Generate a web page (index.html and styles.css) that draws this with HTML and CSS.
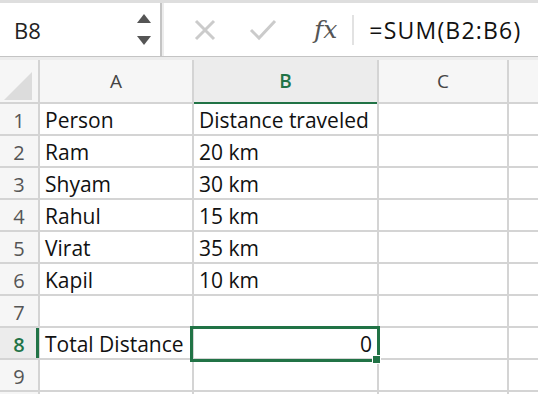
FILE: index.html
```html
<!DOCTYPE html>
<html lang="en">

<head>
    <meta charset="UTF-8">
    <title>Sheet1</title>
    <link rel="stylesheet" href="styles.css">
</head>

<body>
    <!-- formula bar -->
    <div class="topbar">
        <div class="namebox">
            <span class="cellname">B8</span>
            <svg class="spin" width="14" height="32" viewBox="0 0 14 32">
                <polygon points="7,0 14,9 0,9" fill="#555" />
                <polygon points="0,22 14,22 7,31" fill="#555" />
            </svg>
        </div>
        <div class="fbar">
            <svg class="ico" width="22" height="22" viewBox="0 0 22 22">
                <path d="M2 2 L20 20 M20 2 L2 20" stroke="#cbcbcb" stroke-width="3" fill="none" />
            </svg>
            <svg class="ico check" width="28" height="22" viewBox="0 0 28 22">
                <path d="M2 11 L10 19 L26 2" stroke="#cbcbcb" stroke-width="3" fill="none" />
            </svg>
            <span class="fx">fx</span>
            <span class="fsep"></span>
            <span class="formula">=SUM(B2:B6)</span>
        </div>
    </div>
    <div class="topline"></div>

    <!-- sheet grid -->
    <div class="sheet">
        <div class="hd corner">
            <svg width="32" height="32" viewBox="0 0 32 32">
                <polygon points="30,2 30,30 2,30" fill="#dcdcdc" />
            </svg>
        </div>
        <div class="hd">A</div>
        <div class="hd colsel">B</div>
        <div class="hd">C</div>
        <div class="hd"></div>

        <div class="rn">1</div><div class="c">Person</div><div class="c">Distance traveled</div><div class="c"></div><div class="c"></div>
        <div class="rn">2</div><div class="c">Ram</div><div class="c">20 km</div><div class="c"></div><div class="c"></div>
        <div class="rn">3</div><div class="c">Shyam</div><div class="c">30 km</div><div class="c"></div><div class="c"></div>
        <div class="rn">4</div><div class="c">Rahul</div><div class="c">15 km</div><div class="c"></div><div class="c"></div>
        <div class="rn">5</div><div class="c">Virat</div><div class="c">35 km</div><div class="c"></div><div class="c"></div>
        <div class="rn">6</div><div class="c">Kapil</div><div class="c">10 km</div><div class="c"></div><div class="c"></div>
        <div class="rn">7</div><div class="c"></div><div class="c"></div><div class="c"></div><div class="c"></div>
        <div class="rn rowsel">8</div><div class="c">Total Distance</div><div class="c num active">0</div><div class="c"></div><div class="c"></div>
        <div class="rn">9</div><div class="c"></div><div class="c"></div><div class="c"></div><div class="c"></div>
        <div class="rn"></div><div class="c"></div><div class="c"></div><div class="c"></div><div class="c"></div>
    </div>
</body>

</html>
```

FILE: styles.css
```css
body {
    margin: 0;
    width: 538px;
    height: 394px;
    overflow: hidden;
    background: #fff;
    font-family: "Open Sans", Lato, sans-serif;
    color: #111;
}

.topbar {
    display: flex;
    height: 53px;
    border-top: 3px solid #dedede;
    border-bottom: 1px solid #c4c4c4;
    background: #ececec;
}

.namebox {
    width: 162px;
    display: flex;
    align-items: center;
    justify-content: space-between;
    background: #fff;
    border-right: 2px solid #c4c4c4;
    padding: 0 9px 0 14px;
    box-sizing: border-box;
}

.cellname {
    font-size: 22px;
    color: #222;
}

.fbar {
    flex: 1;
    margin-left: 2px;
    display: flex;
    align-items: center;
    background: #fff;
}

.ico {
    margin-left: 30px;
}

.check {
    margin-left: 33px;
}

.fx {
    margin-left: 37px;
    font-family: "DejaVu Serif", "Liberation Serif", serif;
    font-style: italic;
    font-size: 25px;
    color: #555;
}

.fsep {
    width: 2px;
    height: 30px;
    margin-left: 15px;
    background: #e2e2e2;
}

.formula {
    margin-left: 15px;
    font-size: 23px;
    letter-spacing: 1.2px;
    color: #111;
}

.topline {
    height: 3px;
    background: #ececec;
}

.sheet {
    display: grid;
    grid-template-columns: 38px 152px 183px 128px 1fr;
    grid-template-rows: 42px;
    grid-auto-rows: 30px;
    gap: 2px;
    background: #d4d4d4;
}

.hd {
    background: #f6f6f6;
    display: flex;
    align-items: center;
    justify-content: center;
    font-size: 19px;
    color: #444;
}

.corner {
    align-items: flex-end;
    justify-content: flex-start;
    padding: 0 0 0 2px;
}

.colsel {
    background: #ececec;
    color: #217346;
    font-weight: 600;
    box-shadow: 0 2px 0 #217346;
}

.rn {
    background: #f6f6f6;
    display: flex;
    align-items: center;
    justify-content: center;
    padding-top: 2px;
    font-size: 20px;
    color: #555;
}

.rowsel {
    position: relative;
    background: #ececec;
    color: #217346;
    font-weight: 600;
}

.rowsel::after {
    content: "";
    position: absolute;
    top: 0;
    bottom: 0;
    right: -1px;
    width: 3px;
    background: #217346;
}

.c {
    background: #fff;
    display: flex;
    align-items: center;
    padding: 2px 5px 0;
    font-size: 21px;
    white-space: nowrap;
}

.num {
    justify-content: flex-end;
}

.active {
    position: relative;
}

/* selection border + fill handle */
.active::after {
    content: "";
    position: absolute;
    top: -2px;
    left: -4px;
    right: -3px;
    bottom: -4px;
    border: 3px solid #217346;
}

.active::before {
    content: "";
    position: absolute;
    right: -4px;
    bottom: -6px;
    width: 7px;
    height: 7px;
    background: #217346;
    border: 1px solid #fff;
    z-index: 1;
}
```
